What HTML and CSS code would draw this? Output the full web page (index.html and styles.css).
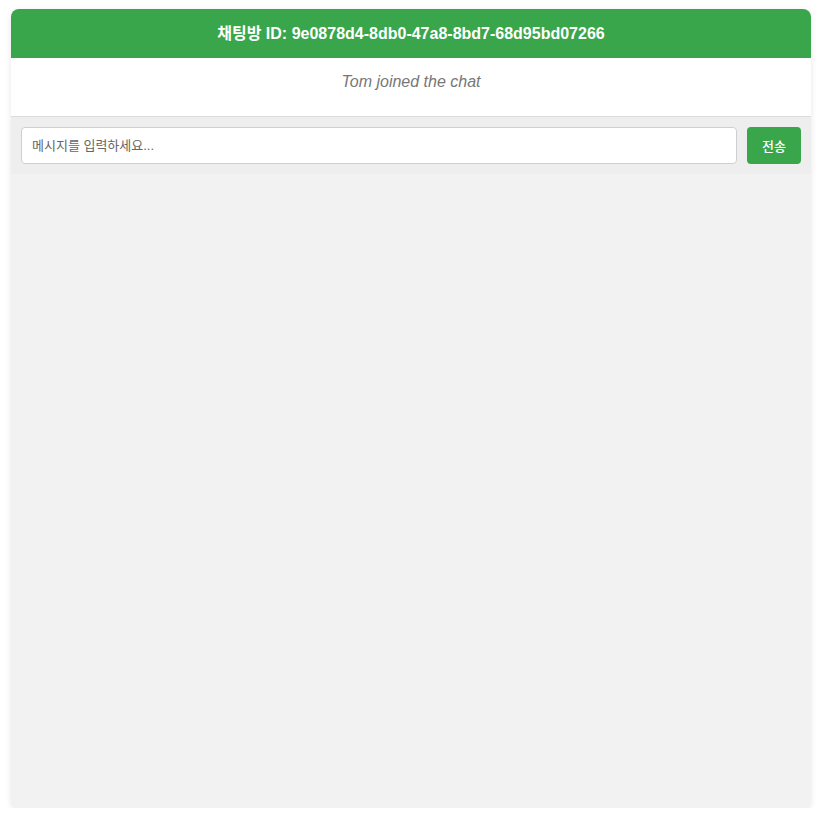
FILE: index.html
```html
<!DOCTYPE html>
<html lang="ko">
<head>
<meta charset="utf-8">
<link rel="stylesheet" href="styles.css">
</head>
<body>
<div class="chat">
  <div class="chat-header">채팅방 ID: 9e0878d4-8db0-47a8-8bd7-68d95bd07266</div>
  <div class="messages">
    <div class="system-msg">Tom joined the chat</div>
  </div>
  <div class="input-area">
    <input class="msg-input" type="text" placeholder="메시지를 입력하세요...">
    <button class="send-btn">전송</button>
  </div>
</div>
</body>
</html>
```
FILE: styles.css
```css
html, body {
  margin: 0;
  padding: 0;
  background: #ffffff;
}
body {
  padding: 9px 11px 0;
  font-family: "Liberation Sans", Arial, "Noto Sans CJK KR", sans-serif;
}
.chat {
  width: 800px;
  height: 799px;
  background: #f2f2f2;
  border-radius: 8px;
  box-shadow: 0 2px 6px rgba(0,0,0,0.1);
  overflow: hidden;
  display: flex;
  flex-direction: column;
}
.chat-header {
  background: #3aa64b;
  color: #fff;
  font-weight: bold;
  font-size: 16px;
  line-height: 19px;
  padding: 15px 10px;
  text-align: center;
}
.messages {
  background: #fff;
  padding: 15px 10px 25px;
  border-bottom: 1px solid #dcdcdc;
}
.system-msg {
  text-align: center;
  font-style: italic;
  color: #777;
  font-size: 16px;
  line-height: 18px;
}
.input-area {
  background: #eeeeee;
  padding: 10px;
  display: flex;
  gap: 10px;
}
.msg-input {
  flex: 1;
  height: 37px;
  box-sizing: border-box;
  border: 1px solid #cfcfcf;
  border-radius: 4px;
  padding: 0 10px;
  font-size: 13px;
  font-family: "Liberation Sans", Arial, "Noto Sans CJK KR", sans-serif;
  color: #333;
  background: #fff;
  outline: none;
}
.msg-input::placeholder {
  color: #666;
}
.send-btn {
  width: 54px;
  height: 37px;
  border: none;
  border-radius: 4px;
  background: #3aa64b;
  color: #fff;
  font-size: 13px;
  font-weight: 500;
  font-family: "Liberation Sans", Arial, "Noto Sans CJK KR", sans-serif;
  padding: 0;
  cursor: pointer;
}
```
